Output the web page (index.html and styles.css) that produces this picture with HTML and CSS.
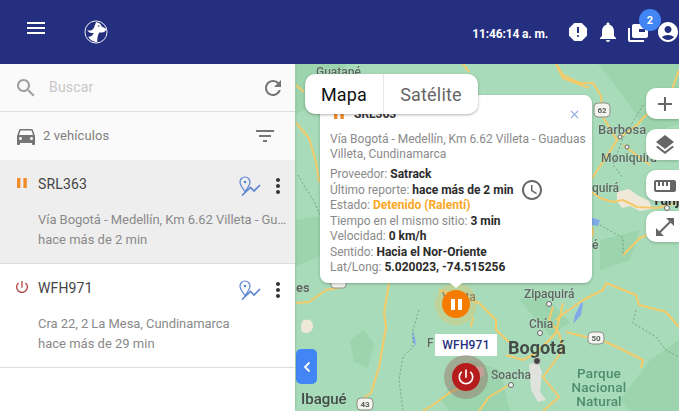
FILE: index.html
```html
<!DOCTYPE html>
<html lang="es">
<head>
<meta charset="utf-8">
<title>Satrack</title>
<link rel="stylesheet" href="styles.css">
</head>
<body>
<header class="topbar">
  <div class="topbar-left">
    <svg class="icon-menu" viewBox="0 0 18 12"><path d="M0 0h18v2H0zM0 5h18v2H0zM0 10h18v2H0z"/></svg>
    <svg class="logo" viewBox="0 0 26 26">
      <circle cx="13" cy="13" r="12" fill="none" stroke="#fff" stroke-width="1"/>
      <path d="M13 2.500C16 2.500 18 4 19.200 7L24 9.500C24 12 22 13.500 19 13.500L16.500 13.500C15 16 14.300 19 14.300 23.800L13 24C9 23.500 6 21 4.500 18C7 18.500 9.500 17 10.500 14C8 14.500 5 13.500 3.500 11C6 12 9 11.500 10.500 9C11.500 7 12 5 13 2.500Z" fill="#fff"/>
      <circle cx="16" cy="6.500" r=".8" fill="#252f7f"/>
    </svg>
  </div>
  <div class="topbar-right">
    <span class="clock">11:46:14 a. m.</span>
    <svg class="top-icon" viewBox="0 0 24 24"><path d="M15.730 3H8.270L3 8.270v7.460L8.270 21h7.460L21 15.730V8.270L15.730 3zM12 17c-.55 0-1-.45-1-1s.45-1 1-1 1 .45 1 1-.45 1-1 1zm1-4h-2V7h2v6z"/></svg>
    <svg class="top-icon" viewBox="0 0 24 24"><path d="M12 22c1.100 0 2-.9 2-2h-4c0 1.100.89 2 2 2zm6-6v-5c0-3.070-1.640-5.640-4.500-6.320V4c0-.83-.67-1.500-1.500-1.500s-1.500.67-1.500 1.500v.68C7.630 5.360 6 7.920 6 11v5l-2 2v1h16v-1l-2-2z"/></svg>
    <span class="badge-wrap">
      <svg class="top-icon" viewBox="0 0 24 24"><path d="M4 8H2v12c0 1.100.9 2 2 2h14v-2H4V8z"/><path fill-rule="evenodd" d="M8 4h12c1.100 0 2 .9 2 2v10c0 1.100-.9 2-2 2H8c-1.100 0-2-.9-2-2V6c0-1.100.9-2 2-2zm5 5v3h6V9z"/></svg>
      <span class="badge">2</span>
    </span>
    <svg class="top-icon" viewBox="0 0 24 24"><path d="M12 2C6.480 2 2 6.480 2 12s4.480 10 10 10 10-4.480 10-10S17.520 2 12 2zm0 4c1.930 0 3.500 1.570 3.500 3.500S13.930 13 12 13s-3.500-1.570-3.500-3.500S10.070 6 12 6zm0 14c-2.030 0-4.430-.82-6.140-2.880C7.550 15.800 9.680 15 12 15s4.450.8 6.140 2.120C16.430 19.180 14.030 20 12 20z"/></svg>
  </div>
</header>

<main class="content">
  <aside class="sidebar">
    <div class="search-row">
      <svg class="icon-search" viewBox="0 0 24 24"><path d="M15.500 14h-.79l-.28-.27C15.410 12.590 16 11.110 16 9.500 16 5.910 13.090 3 9.500 3S3 5.910 3 9.500 5.910 16 9.500 16c1.610 0 3.090-.59 4.230-1.570l.27.28v.79l5 4.990L20.490 19l-4.990-5zm-6 0C7.010 14 5 11.990 5 9.500S7.010 5 9.500 5 14 7.010 14 9.500 11.990 14 9.500 14z"/></svg>
      <span class="search-text">Buscar</span>
      <svg class="icon-refresh" viewBox="0 0 24 24"><path d="M17.650 6.350C16.200 4.900 14.210 4 12 4c-4.420 0-7.990 3.580-7.990 8s3.570 8 7.990 8c3.730 0 6.840-2.550 7.730-6h-2.080c-.82 2.330-3.040 4-5.650 4-3.310 0-6-2.690-6-6s2.690-6 6-6c1.660 0 3.140.69 4.220 1.780L13 11h7V4l-2.350 2.350z"/></svg>
    </div>
    <div class="count-row">
      <svg class="icon-car" viewBox="0 0 24 24"><path d="M18.920 6.010C18.720 5.420 18.160 5 17.500 5h-11c-.66 0-1.210.42-1.420 1.010L3 12v8c0 .55.45 1 1 1h1c.55 0 1-.45 1-1v-1h12v1c0 .55.45 1 1 1h1c.55 0 1-.45 1-1v-8l-2.080-5.990zM6.500 16c-.83 0-1.500-.67-1.500-1.500S5.670 13 6.500 13s1.500.67 1.500 1.500S7.330 16 6.500 16zm11 0c-.83 0-1.500-.67-1.500-1.500s.67-1.500 1.500-1.500 1.500.67 1.500 1.500-.67 1.500-1.500 1.500zM5 11l1.500-4.500h11L19 11H5z"/></svg>
      <span class="count-text">2 vehículos</span>
      <svg class="icon-filter" viewBox="0 0 24 24"><path d="M10 18h4v-2h-4v2zM3 6v2h18V6H3zm3 7h12v-2H6v2z"/></svg>
    </div>
    <article class="vehicle selected">
      <div class="vehicle-head">
        <svg class="status-icon pause" viewBox="0 0 10 10"><path d="M0 0h3.400v10H0zM6.400 0h3.400v10H6.400z"/></svg>
        <span class="plate">SRL363</span>
        <svg class="route" viewBox="0 0 22 21"><path d="M6 15.500C3 11.500 1 9 1 6a5 5 0 0 1 10 0c0 3-2 5.500-5 9.500z" stroke-width="1.200"/><circle cx="6" cy="6" r="1.300" class="fill"/><path d="M3 19.500l8.500-8 3.500 3.500 6-6" stroke-width="1.700"/></svg>
        <svg class="more" viewBox="0 0 24 24"><path d="M12 8c1.100 0 2-.9 2-2s-.9-2-2-2-2 .9-2 2 .9 2 2 2zm0 2c-1.100 0-2 .9-2 2s.9 2 2 2 2-.9 2-2-.9-2-2-2zm0 6c-1.100 0-2 .9-2 2s.9 2 2 2 2-.9 2-2-.9-2-2-2z"/></svg>
      </div>
      <p class="addr">Vía Bogotá - Medellín, Km 6.62 Villeta - Guaduas Villeta, Cundinamarca</p>
      <p class="ago">hace más de 2 min</p>
    </article>
    <article class="vehicle">
      <div class="vehicle-head">
        <svg class="status-icon power" viewBox="0 0 24 24"><path d="M13 3h-2v10h2V3zm4.830 2.170l-1.420 1.420C17.990 7.860 19 9.810 19 12c0 3.870-3.130 7-7 7s-7-3.130-7-7c0-2.190 1.010-4.140 2.580-5.420L6.170 5.170C4.230 6.820 3 9.260 3 12c0 4.970 4.030 9 9 9s9-4.030 9-9c0-2.740-1.230-5.180-3.170-6.830z"/></svg>
        <span class="plate">WFH971</span>
        <svg class="route" viewBox="0 0 22 21"><path d="M6 15.500C3 11.500 1 9 1 6a5 5 0 0 1 10 0c0 3-2 5.500-5 9.500z" stroke-width="1.200"/><circle cx="6" cy="6" r="1.300" class="fill"/><path d="M3 19.500l8.500-8 3.500 3.500 6-6" stroke-width="1.700"/></svg>
        <svg class="more" viewBox="0 0 24 24"><path d="M12 8c1.100 0 2-.9 2-2s-.9-2-2-2-2 .9-2 2 .9 2 2 2zm0 2c-1.100 0-2 .9-2 2s.9 2 2 2 2-.9 2-2-.9-2-2-2zm0 6c-1.100 0-2 .9-2 2s.9 2 2 2 2-.9 2-2-.9-2-2-2z"/></svg>
      </div>
      <p class="addr">Cra 22, 2 La Mesa, Cundinamarca</p>
      <p class="ago">hace más de 29 min</p>
    </article>
  </aside>

  <section class="map">
    <svg class="map-art" viewBox="295 64 384 347">
      <g class="terrain">
        <path d="M296 64h50l-10 30-40 20z"/>
        <path d="M598 64h81v60l-30 10-20-30z"/>
        <path d="M620 400l30-40 29-20v71h-50z"/>
        <path d="M440 400l30-40 30 10 10 41h-60z"/>
        <path d="M350 340l14-10 10 14-6 24-14-6z"/>
        <path d="M296 220l24-4v40l-24 10z"/>
        <path d="M520 300l20-8 30 30-20 14z"/>
        <path d="M600 240l40-10-10 30-30 10z"/>
      </g>
      <path class="urban" d="M617 192l12-3 8 6 12 6 3 8-12 2-10-5-8 2-5-7z"/>
      <path class="urban grey" d="M529 364l9-2 4 10-2 20 6 8-8 2-7-12z"/>
      <path class="urban" d="M304 320c6-2 9 2 9 6s-3 7-7 7-5-3-5-6 1-6 3-7z"/>
      <path class="urban pink" d="M476 366l7 1 1 9-6 2z"/>
      <g class="water">
        <path d="M583 303l-2 12-8 9 2-9 6-12z"/>
        <path d="M592 218l8 2-2 6-6-1z"/>
        <path d="M412 330l3 8 1 8-3-4z"/>
      </g>
      <g class="road">
        <path d="M556 64l7 11 10 5 7 3h13l8 13 2 21 14 23-14 22-11 16"/>
        <path d="M617 140l20-15 6-7 27-23 9-25"/>
        <path d="M623 145l27 20"/>
        <path d="M592 192l8 6 13 4 10-2 14 7 20 1 22-6"/>
        <path d="M590 222l3 10-3 10"/>
        <path d="M623 255l17-17 39-16"/>
        <path d="M463 64l6 8"/>
        <path d="M556 64l7 14 26 10"/>
        <path d="M296 85l8 7"/>
        <path d="M296 123l13 15 7 24 3 20"/>
        <path d="M296 303l13-1 17-12 13-2"/>
        <path d="M389 283l-5 30 2 14-7 40-8 26-15 10"/>
        <path d="M439 290l24 7 16 6 17 17v10l13 12"/>
        <path d="M473 317l-2 10"/>
        <path d="M506 355l17 5 13-7 20-20 7-30"/>
        <path d="M553 307l-4 13 10 13 4 17-20 27 16 20-16 14"/>
        <path d="M566 332l20 5 20 5 13 6 24 12-2 8"/>
        <path d="M606 283l-3 7-20 10-17 12-10 8"/>
        <path d="M606 283l30 12 3 10 27 7 13 15"/>
        <path d="M466 385l-17 8-13 10-13 8"/>
        <path d="M509 385l-20 12-10 14"/>
      </g>
      <g class="dash">
        <path d="M419 310l-6 20v17l-10 10-4 23 4 31"/>
        <path d="M636 310l-3 13 23 14 10 13 13 7"/>
        <path d="M643 105l-20 33-10 27 10 13"/>
        <path d="M600 225l23 13v17"/>
        <path d="M298 175l8 14 8 12 6 14"/>
      </g>
      <text class="place" x="316" y="76">Guatapé</text>
      <text class="place mid" x="296" y="292">es</text>
      <text class="place strong" x="598" y="134">Barbosa</text>
      <text class="place strong tight" x="601" y="162">Moniquirá</text>
      <text class="place" x="592" y="192">quirá</text>
      <text class="place dark" x="652" y="205">Tunja</text>
      <text class="place" x="592" y="249">é</text>
      <text class="place" x="524" y="298">Zipaquirá</text>
      <text class="place" x="529" y="328">Chía</text>
      <text class="place" x="442" y="301">Villeta</text>
      <text class="place" x="427" y="347">F</text>
      <text class="place" x="491" y="379">Soacha</text>
      <text class="big" x="508" y="354">Bogotá</text>
      <text class="park" x="599" y="378">Parque</text>
      <text class="park" x="599" y="392">Nacional</text>
      <text class="park" x="599" y="406">Natural</text>
      <text class="big city" x="301" y="404">Ibagué</text>
      <g class="shield">
        <rect x="594" y="103" width="16" height="14" rx="4"/><text x="602" y="113">62</text>
        <rect x="588" y="332" width="16" height="12" rx="4"/><text x="596" y="341">50</text>
        <rect x="357" y="398" width="16" height="12" rx="4"/><text x="365" y="407">43</text>
        <rect x="331" y="278" width="15" height="10" rx="3"/>
      </g>
      <g class="pois">
        <circle cx="549" cy="304" r="2.500"/><circle cx="540" cy="333" r="2.500"/><circle cx="511" cy="385" r="2.500"/><circle cx="620" cy="137" r="2"/><circle cx="627" cy="147" r="2"/><circle cx="667" cy="208" r="2.500"/>
      </g>
      <circle cx="537" cy="361" r="3.500" class="capital"/>
    </svg>

    <div class="maptype">
      <span class="maptype-btn on">Mapa</span>
      <span class="maptype-btn">Satélite</span>
    </div>

    <div class="popup">
      <div class="popup-title">
        <svg class="status-icon pause" viewBox="0 0 10 10"><path d="M0 0h3.400v10H0zM6.400 0h3.400v10H6.400z"/></svg>
        <span>SRL363</span>
      </div>
      <svg class="popup-close" viewBox="0 0 10 10"><path d="M1 1l8 8M9 1L1 9"/></svg>
      <p class="popup-addr">Vía Bogotá - Medellín, Km 6.62 Villeta - Guaduas<br>Villeta, Cundinamarca</p>
      <ul class="popup-list">
        <li>Proveedor: <b>Satrack</b></li>
        <li>Último reporte: <b>hace más de 2 min</b><svg class="clock-icon" viewBox="0 0 24 24"><path d="M11.990 2C6.470 2 2 6.480 2 12s4.470 10 9.990 10C17.520 22 22 17.520 22 12S17.520 2 11.990 2zM12 20c-4.420 0-8-3.580-8-8s3.580-8 8-8 8 3.580 8 8-3.580 8-8 8zm.5-13H11v6l5.250 3.150.75-1.230-4.500-2.670z"/></svg></li>
        <li>Estado: <b class="warn">Detenido (Ralentí)</b></li>
        <li>Tiempo en el mismo sitio: <b>3 min</b></li>
        <li>Velocidad: <b>0 km/h</b></li>
        <li>Sentido: <b>Hacia el Nor-Oriente</b></li>
        <li>Lat/Long: <b>5.020023, -74.515256</b></li>
      </ul>
    </div>

    <div class="map-tools">
      <button class="tool"><svg viewBox="0 0 24 24"><path d="M19 13h-6v6h-2v-6H5v-2h6V5h2v6h6v2z"/></svg></button>
      <button class="tool"><svg viewBox="0 0 24 24"><path d="M11.990 18.540l-7.370-5.730L3 14.070l9 7 9-7-1.630-1.270-7.380 5.740zM12 16l7.360-5.730L21 9l-9-7-9 7 1.630 1.270L12 16z"/></svg></button>
      <button class="tool"><svg viewBox="0 0 24 24"><path d="M21 6H3c-1.100 0-2 .9-2 2v8c0 1.100.9 2 2 2h18c1.100 0 2-.9 2-2V8c0-1.100-.9-2-2-2zm0 10H3V8h2v4h2V8h2v4h2V8h2v4h2V8h2v8z"/></svg></button>
      <button class="tool"><svg viewBox="0 0 24 24"><path d="M21 11V3h-8l3.290 3.290-10 10L3 13v8h8l-3.290-3.290 10-10z"/></svg></button>
    </div>

    <button class="collapse"><svg viewBox="0 0 8 12"><path d="M6.500 1.500 2 6l4.500 4.500"/></svg></button>

    <div class="marker marker-pause">
      <span class="marker-dot"><svg viewBox="0 0 11 11"><path d="M0 0h4v11H0zM7 0h4v11H7z"/></svg></span>
    </div>
    <div class="marker-label">WFH971</div>
    <div class="marker marker-power">
      <span class="marker-dot"><svg viewBox="0 0 24 24"><path d="M13 3h-2v10h2V3zm4.830 2.170l-1.420 1.420C17.990 7.860 19 9.810 19 12c0 3.870-3.130 7-7 7s-7-3.130-7-7c0-2.190 1.010-4.140 2.580-5.420L6.170 5.170C4.230 6.820 3 9.260 3 12c0 4.970 4.030 9 9 9s9-4.030 9-9c0-2.740-1.230-5.180-3.170-6.830z"/></svg></span>
    </div>
  </section>
</main>
</body>
</html>
```
FILE: styles.css
```css
* { box-sizing: border-box; }
html, body { margin: 0; height: 100%; overflow: hidden; }
body { font-family: Roboto, "Liberation Sans", sans-serif; background: #fff; color: #444; display: flex; flex-direction: column; }
p { margin: 0; }

.topbar { height: 64px; flex: none; background: #252f7f; display: flex; align-items: center; justify-content: space-between; color: #fff; position: relative; z-index: 3; }
.topbar-left { display: flex; align-items: flex-start; padding-left: 27px; gap: 39px; }
.icon-menu { width: 18px; height: 12px; fill: #fff; margin-top: 2px; }
.logo { width: 24px; height: 24px; display: block; margin-top: 0; }
.topbar-right { display: flex; align-items: center; margin-right: -1px; }
.clock { font-size: 12px; font-weight: 700; margin: 3px 18px 0 0; letter-spacing: -.15px; }
.top-icon { width: 24px; height: 24px; fill: #fff; display: block; }
.top-icon + .top-icon { margin-left: 6px; }
.badge-wrap { position: relative; margin: 0 6px; }
.badge { position: absolute; left: 13px; top: -11px; width: 22px; height: 22px; border-radius: 50%; background: #4285f4; font-size: 11px; font-weight: 700; display: flex; align-items: center; justify-content: center; }

.content { flex: 1; display: flex; min-height: 0; }

.sidebar { width: 295px; flex: none; background: #fff; position: relative; z-index: 2; box-shadow: 0 0 3px rgba(0,0,0,.2); }
.search-row { height: 48px; background: #fafafa; border-bottom: 1px solid #ddd; display: flex; align-items: center; padding: 0 10px 0 14px; }
.icon-search { width: 24px; height: 24px; fill: #9e9e9e; }
.search-text { flex: 1; margin: -2px 0 0 11px; font-size: 14px; color: #c8c8c8; letter-spacing: .2px; }
.icon-refresh { width: 24px; height: 24px; fill: #757575; }
.count-row { height: 48px; background: #fafafa; display: flex; align-items: center; padding: 0 22px 0 14px; }
.icon-car { width: 24px; height: 24px; fill: #757575; }
.count-text { flex: 1; margin: -2px 0 0 5px; font-size: 13px; color: #808080; letter-spacing: .1px; }
.icon-filter { width: 24px; height: 24px; fill: #757575; margin-right: -4px; }

.vehicle { height: 104px; border-bottom: 1px solid #ddd; padding: 12px 0 0 38px; }
.vehicle.selected { background: #eee; }
.vehicle-head { display: flex; align-items: center; height: 24px; position: relative; margin-left: -38px; padding-left: 38px; }
.status-icon { position: absolute; }
.vehicle .status-icon { left: 17px; top: 6px; width: 10px; height: 10px; }
.vehicle .status-icon.power { left: 14px; top: 3px; width: 16px; height: 16px; }
.pause { fill: #f28c28; }
.power { fill: #b14a4a; }
.plate { flex: 1; font-size: 14px; color: #444; letter-spacing: .15px; }
.route { width: 22px; height: 21px; stroke: #5c85d6; fill: none; margin: 5px 5px 0 0; }
.route .fill { fill: #5c85d6; stroke: none; }
.more { width: 24px; height: 24px; fill: #333; margin: 3px 5px 0 0; }
.addr { margin-top: 14px; font-size: 13px; line-height: 20px; color: #8a8a8a; width: 252px; white-space: nowrap; overflow: hidden; text-overflow: ellipsis; letter-spacing: -.05px; }
.ago { font-size: 13px; line-height: 20px; color: #8a8a8a; }

.map { flex: 1; position: relative; background: #a8dbb9; overflow: hidden; }
.map-art { position: absolute; inset: 0; width: 100%; height: 100%; display: block; filter: blur(.45px); }
.terrain path { fill: #9bd4ad; }
.urban { fill: #f0e8d8; }
.urban.grey { fill: #dfe3dc; }
.urban.pink { fill: #f2c6c6; }
.water path { fill: #7fa9e8; }
.road path { fill: none; stroke: #f5cb6a; stroke-width: 2; stroke-linejoin: round; }
.dash path { fill: none; stroke: #6f8f7c; stroke-width: .8; stroke-dasharray: 2 2; }
.place { font: 500 12px Roboto, sans-serif; fill: #5b6660; stroke: #d5ebdc; stroke-width: .4; paint-order: stroke; }
.place.strong { font-size: 13px; }
.place.tight { font-size: 12px; letter-spacing: .2px; }
.place.mid { font-size: 13px; font-weight: 700; }
.place.dark { fill: #333; font-size: 14px; font-weight: 700; }
.big { font: 700 18px Roboto, sans-serif; fill: #444b48; }
.big.city { font-size: 15px; font-weight: 500; }
.park { font: 500 13.500px Roboto, sans-serif; fill: #4d8c6d; text-anchor: middle; letter-spacing: .2px; }
.shield rect { fill: #f4f4ee; stroke: #8a8f88; stroke-width: 1; }
.shield text { font: 700 8px Roboto, sans-serif; fill: #5c625e; text-anchor: middle; }
.pois circle { fill: #f3f3f3; stroke: #666; stroke-width: 1; }
.capital { fill: #444; stroke: #ccc; stroke-width: 1; }

.maptype { position: absolute; left: 10px; top: 10px; height: 40px; width: 173px; background: #fff; border-radius: 10px; display: flex; z-index: 2; box-shadow: 0 1px 3px rgba(0,0,0,.3); }
.maptype-btn { display: flex; align-items: center; justify-content: center; font-size: 18px; color: #666; flex: 1; letter-spacing: .2px; }
.maptype-btn.on { color: #111; flex: 0 0 79px; border-right: 1px solid #e6e6e6; }

.popup { position: absolute; left: 25px; top: 31px; width: 272px; height: 188px; background: #fff; border-radius: 8px; padding: 13px 10px 0; box-shadow: 0 1px 3px rgba(0,0,0,.25); z-index: 1; }
.popup::after { content: ""; position: absolute; left: 130px; bottom: -5px; border-style: solid; border-width: 5px 6px 0; border-color: #fff transparent transparent; }
.popup-title { display: flex; align-items: center; font-size: 12px; font-weight: 700; height: 12px; color: #333; padding-left: 24px; position: relative; }
.popup-title .status-icon { left: 4px; top: 1px; width: 10px; height: 10px; }
.popup-close { position: absolute; right: 13px; top: 15px; width: 9px; height: 9px; stroke: #86a6dd; stroke-width: 1.200; fill: none; }
.popup-addr { margin-top: 12px; font-size: 12px; line-height: 15px; color: #8a8a8a; white-space: nowrap; }
.popup-list { list-style: none; margin: 5px 0 0; padding: 0; font-size: 12px; line-height: 15.500px; color: #8a8a8a; }
.popup-list b { color: #2b2b2b; font-weight: 700; }
.popup-list b.warn { color: #f9a825; }
.clock-icon { width: 24px; height: 24px; fill: #666; position: absolute; margin: -5px 0 0 6px; }

.map-tools { position: absolute; right: 0; top: 24px; display: flex; flex-direction: column; gap: 10px; }
.tool { width: 33px; height: 31px; border: 0; padding: 0 0 0 4px; background: #fff; border-radius: 10px 0 0 10px; display: flex; align-items: center; justify-content: center; box-shadow: 0 1px 3px rgba(0,0,0,.2); }
.tool svg { width: 24px; height: 24px; fill: #666; }

.collapse { position: absolute; left: 1px; top: 285px; width: 21px; height: 35px; background: #4285f4; border: 0; padding: 0; border-radius: 5px; display: flex; align-items: center; justify-content: center; }
.collapse svg { width: 8px; height: 12px; fill: none; stroke: #fff; stroke-width: 1.800; }

.marker { position: absolute; border-radius: 50%; display: flex; align-items: center; justify-content: center; }
.marker-pause { left: 140px; top: 219px; width: 42px; height: 42px; background: rgba(245,190,80,.3); }
.marker-power { left: 149px; top: 291px; width: 44px; height: 44px; background: rgba(150,110,100,.45); }
.marker-dot { width: 28px; height: 28px; border-radius: 50%; display: flex; align-items: center; justify-content: center; }
.marker-pause .marker-dot { background: #f57c00; }
.marker-pause svg { width: 11px; height: 11px; fill: #fff; }
.marker-power .marker-dot { background: #b71c1c; }
.marker-power svg { width: 20px; height: 20px; fill: #fff; }
.marker-label { position: absolute; left: 140px; top: 270px; width: 62px; height: 22px; background: #fff; display: flex; align-items: center; justify-content: center; font-size: 12px; font-weight: 500; color: #252f7f; letter-spacing: .2px; }
```
